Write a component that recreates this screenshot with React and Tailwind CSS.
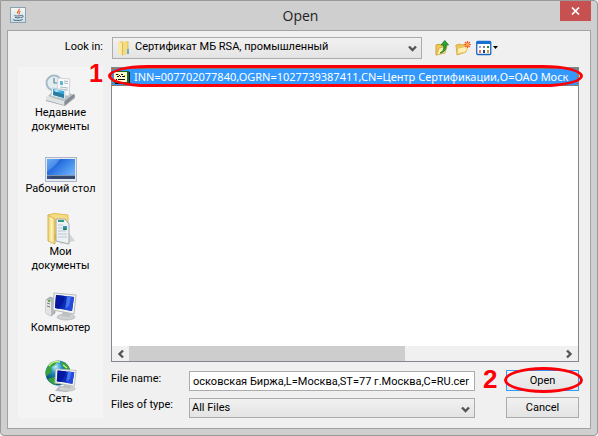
import { useState } from 'react'

const FILE = 'INN=007702077840,OGRN=1027739387411,CN=Центр Сертификации,О=ОАО Моск'

// ============================================================================
// Icons
// ============================================================================
function JavaIcon() {
  return (
    <svg width="16" height="16" viewBox="0 0 16 16" fill="none">
      <defs>
        <linearGradient id="java" x2="0" y2="1">
          <stop stopColor="#f7f7f6"/>
          <stop offset="1" stopColor="#c9dbe5"/>
        </linearGradient>
      </defs>
      <rect x=".5" y=".5" width="15" height="15" fill="url(#java)" stroke="#8ca3af"/>
      <path d="M9.2 1.8c1 1.8-3 2.4-1.5 4.8M10.4 4.3c-2 1-1 1.7-1.2 3" stroke="#e2672d" strokeWidth="1.2"/>
      <path d="M4.3 8.3c-.8.9 6 .9 7 0M5 10.3c1 .7 4 .7 5.5.1M3.4 12.2c-1 1.7 8.5 1.6 9.2.1M11.4 8.4c2.8-.5 2 2-.4 2.3" stroke="#43647a"/>
    </svg>
  )
}

function FolderIcon() {
  return (
    <svg width="16" height="16" viewBox="0 0 16 16">
      <path d="M2 2l4-1 2 1 4-1v13l-6 1-4-2z" fill="#e9cf73"/>
      <path d="M2 1.5L6.5 3v12.5L2 13.5z" fill="#f9e9a5"/>
      <path d="M7 2l5-1v12.5l-5 1z" fill="#f5dc83"/>
      <path d="M6.5 3v12.5M12 1v9" stroke="#d4b14e" strokeWidth=".8"/>
      <path d="M11 14V9.500c0-1 2-1 2 0V14z" fill="#70afcc"/>
    </svg>
  )
}

function UpFolderIcon() {
  return (
    <svg width="15" height="16" viewBox="0 0 15 16">
      <path d="M1 5l3-1 1 1 5-1v8l-9 3z" fill="#edc854" stroke="#d2a33d"/>
      <path d="M1.500 15L4 8l8-2-2 7z" fill="#ffefad" stroke="#d8b252"/>
      <path d="M5 13c4-2 4-5 3.500-8H6l3.800-4.500L13.500 5H11c.5 5-2 7.500-6 8z" fill="#2fa52d" stroke="#17751c" strokeWidth=".8"/>
    </svg>
  )
}

function NewFolderIcon() {
  return (
    <svg width="16" height="16" viewBox="0 0 16 16">
      <path d="M1 5l4-1 1 1 5-1v8l-9 3z" fill="#edc854" stroke="#d8ac4c"/>
      <path d="M2 14l1-6 10-2-2 6z" fill="#ffefb1" stroke="#e4c16c"/>
      <path d="M12.500 1v7M9 4.500h7M10 2l5 5M15 2l-5 5" stroke="#f05a2c" strokeWidth="1.200"/>
      <circle cx="12.500" cy="4.500" r="1.600" fill="#ffb13d"/>
    </svg>
  )
}

function ViewIcon() {
  return (
    <svg width="16" height="16" viewBox="0 0 16 16">
      <rect x=".75" y="1.500" width="14" height="13" rx="1" fill="#fff" stroke="#1567c2" strokeWidth="1.300"/>
      <path d="M1 1h14v3H1z" fill="#1670d1"/>
      <path d="M3 6h2v2H3z" fill="#a7a0c5"/>
      <path d="M7 6h2v2H7z" fill="#7778a8"/>
      <path d="M11 6h2v2h-2z" fill="#23913c"/>
      <path d="M3 10h2v3H3z" fill="#ef7547"/>
      <path d="M7 10h2v3H7z" fill="#183e9b"/>
      <path d="M11 10h2v3h-2z" fill="#d79e28"/>
    </svg>
  )
}

function CertIcon() {
  return (
    <svg width="16" height="13" viewBox="0 0 16 13" shapeRendering="crispEdges">
      <path d="M1 1h15v12H1z" fill="#111"/>
      <path d="M0 0h15v12H0z" fill="#176c2b"/>
      <path d="M0 1h13v10H0z" fill="#fffbd0"/>
      <path d="M2 3h2v1H2zM5 4h1v1H5zM7 3h2v1H7zM3 5h2v1H3zM6 5h1v1H6zM8 5h3v1H8zM2 8h1v1H2zM4 8h7v1H4z" fill="#111"/>
      <path d="M4 3h1v1H4zM10 4h1v1h-1z" fill="#d5a000"/>
    </svg>
  )
}

function RecentIcon() {
  return (
    <svg width="32" height="32" viewBox="0 0 32 32">
      <path d="M3 22l7-7 20 6-9 10z" fill="#b8bec2"/>
      <circle cx="9" cy="9" r="7.500" fill="#e3eef3" stroke="#a5bbc6" strokeWidth="2"/>
      <path d="M9 4v5h4" fill="none" stroke="#638398" strokeWidth="1.200"/>
      <path d="M13 4l12 1-1 17-12-2z" fill="#f9fbfb" stroke="#ccd3d7"/>
      <path d="M15 7l3 .3v4l-3-.3z" fill="#62b4d3"/>
      <path d="M19 7l4 .5M19 9l4 .5M15 13l8 1M15 15l8 1" stroke="#a9bac2"/>
      <path d="M7 14l13 2v9L6 22z" fill="#f6fbfc" stroke="#c1cdd3"/>
      <path d="M8 15l11 2v7L8 21z" fill="#37a7df"/>
      <path d="M8 19c3-4 6 2 11 1v4L8 21z" fill="#2b7c9c"/>
      <path d="M9 16l7 1-5 1z" fill="#dff6ff"/>
      <path d="M1 23l19 5 10-8v4l-10 8-19-5z" fill="#a1a9ad"/>
      <path d="M1 22l18 5v4L1 26z" fill="#dfe3e4"/>
      <path d="M20 27l9-7v3l-9 8z" fill="#828b91"/>
    </svg>
  )
}

function DesktopIcon() {
  return (
    <svg width="32" height="25" viewBox="0 0 32 25">
      <defs>
        <linearGradient id="desk" x1="0" y1="0" x2="1" y2=".7">
          <stop stopColor="#5ca5f3"/>
          <stop offset=".35" stopColor="#2169dc"/>
          <stop offset="1" stopColor="#66adfa"/>
        </linearGradient>
      </defs>
      <rect x=".5" y=".5" width="31" height="24" fill="#e5eaf1" stroke="#aab7c8"/>
      <rect x="2" y="2" width="28" height="17" fill="url(#desk)"/>
      <path d="M2 2h13C11 8 6 12 2 15z" fill="#8abdf7" opacity=".4"/>
      <path d="M2 18h28v4H2z" fill="#344970"/>
      <path d="M2 18h28v1H2z" fill="#8194ad"/>
      <path d="M2 19h3v3H2z" fill="#35518f"/>
    </svg>
  )
}

function DocumentsIcon() {
  return (
    <svg width="30" height="32" viewBox="0 0 30 32">
      <defs>
        <linearGradient id="docs">
          <stop stopColor="#eccf6d"/>
          <stop offset=".55" stopColor="#fff4bd"/>
          <stop offset="1" stopColor="#e5c35e"/>
        </linearGradient>
      </defs>
      <path d="M14 31L29 28 23 20z" fill="#d5d5d5"/>
      <path d="M2 2l6-1.500 14 1.500v10l-12 16z" fill="#f6dc80" stroke="#dfbb51"/>
      <path d="M10 6l9 0 4 5v20l-13-3z" fill="#edf1f3" stroke="#a0a9ad"/>
      <path d="M12 8h6" stroke="#2e9b83" strokeWidth="2"/>
      <path d="M12 12h5M12 15h5M12 18h8M12 21h9M12 24h9" stroke="#b9c7ce"/>
      <path d="M17 13h4v4h-4z" fill="#349bc4"/>
      <path d="M17 16l2-2 2 3h-4z" fill="#2d8263"/>
      <path d="M2 2l7 4v25L2 28z" fill="url(#docs)" stroke="#d8b54e"/>
      <path d="M8 21c2 0 2 4 0 5" fill="none" stroke="#d2aa44"/>
    </svg>
  )
}

function Monitor() {
  return (
    <>
      <ellipse cx="21" cy="25" rx="9" ry="3" fill="#cfd1d2" stroke="#a9abac" strokeWidth=".6"/>
      <path d="M18 17l6 1 1 7-8-1z" fill="#bbc0c2"/>
      <path d="M9 1l22 2-2 19L8 18z" fill="#f4f4ef" stroke="#b6bab9"/>
      <path d="M11 3l18 2-2 14-17-3z" fill="#092cb9"/>
      <path d="M11 3l9 1c-1 6-3 10-6 13l-4-1z" fill="#0519a0"/>
      <path d="M22 4.200l7 .8-2 14-7-1.200c2-4 3-8 2-13.600z" fill="#2349e0"/>
      <path d="M22 4.200l4 .5-2 9-4 3z" fill="#6294fa" opacity=".6"/>
    </>
  )
}

function ComputerIcon() {
  return (
    <svg width="32" height="29" viewBox="0 0 32 29">
      <path d="M1 8l4-3 5 2v14l-4 3-5-3z" fill="#b7babc" stroke="#919699" strokeWidth=".7"/>
      <path d="M1 8l5 2v14l-5-3z" fill="#e3e5e5"/>
      <path d="M2 11l3 1M2 14l3 1" stroke="#777e80"/>
      <path d="M3 8h2v2H3z" fill="#55b941"/>
      <Monitor/>
    </svg>
  )
}

function NetworkIcon() {
  return (
    <svg width="32" height="32" viewBox="0 0 32 32">
      <defs>
        <radialGradient id="globe" cx=".4" cy=".25">
          <stop stopColor="#bff3fa"/>
          <stop offset=".5" stopColor="#2a8fc3"/>
          <stop offset="1" stopColor="#075985"/>
        </radialGradient>
      </defs>
      <circle cx="13" cy="13" r="12.500" fill="url(#globe)"/>
      <path d="M2 8C4 3 8 1 12 1l-2 4-4 2 1 4-5 5C0 14 0 11 2 8zM16 2c5 0 8 4 9 8l-5-1-3-4zM5 18l5-1 3 5-2 3C7 24 4 21 3 19z" fill="#39a239"/>
      <path d="M4 6c3-4 7-5 11-4M18 5l4 3" fill="none" stroke="#bff27c" strokeWidth="1.500"/>
      <path d="M10 31l4-5 14 2-6 4z" fill="#b8bbbc"/>
      <svg x="9" y="8" width="23" height="24" viewBox="7 0 25 29" preserveAspectRatio="none"><Monitor/></svg>
    </svg>
  )
}

function Chevron({ className }) {
  return (
    <svg className={className} width="9" height="8" viewBox="0 0 9 8" fill="none">
      <path d="M1 1.500l3.500 3.500L8 1.500" stroke="#555" strokeWidth="2.400"/>
    </svg>
  )
}

// ============================================================================
// Dialog parts
// ============================================================================
const PLACES = [
  { label: 'Недавние документы', icon: RecentIcon, height: 'h-[83px]' },
  { label: 'Рабочий стол', icon: DesktopIcon, height: 'h-[56px]' },
  { label: 'Мои документы', icon: DocumentsIcon, height: 'h-[79px]' },
  { label: 'Компьютер', icon: ComputerIcon, height: 'h-[68px]' },
  { label: 'Сеть', icon: NetworkIcon, height: 'h-[65px]' },
]

function Places() {
  return (
    <nav className="flex w-[85px] shrink-0 flex-col bg-[#f4f4f4]">
      {PLACES.map(({ label, icon: Icon, height }) => (
        <button key={label} type="button" className={`flex flex-col items-center px-1 pt-[7px] text-center leading-[14px] ${height}`}>
          <Icon/>
          <span>{label}</span>
        </button>
      ))}
    </nav>
  )
}

function Ring({ className }) {
  return <span className={`pointer-events-none absolute border-[3px] border-[#fb0007] ${className}`}/>
}

export default function App() {
  const [name, setName] = useState('осковская Биржа,L=Москва,ST=77 г.Москва,C=RU.cer')

  return (
    <div className="bg-white">
      <main className="flex min-h-screen flex-col rounded-tr-[4px] rounded-b-[4px] border border-[#999] bg-[#cfcfcf] px-[6px] pb-[6px] font-['Roboto',sans-serif] text-[11px] text-black">
        <header className="grid h-[29px] grid-cols-[46px_1fr_46px] pl-[3px]">
          <span className="pt-[6px]"><JavaIcon/></span>
          <h1 className="pt-1 text-center font-['Open_Sans',sans-serif] text-[14px] leading-[22px] text-[#222]">Open</h1>
          <button type="button" aria-label="Close" className="flex h-5 w-[31px] items-center justify-center justify-self-end bg-[#c75050]">
            <svg width="9" height="8" viewBox="0 0 9 8"><path d="M1 .5l7 7M8 .5l-7 7" stroke="#fff" strokeWidth="1.700"/></svg>
          </button>
        </header>

        <section className="flex grow flex-col border border-[#a3a3a3] bg-[#f0f0f0] pt-[5px] pr-[11px] pb-[10px] pl-[10px]">
          <div className="flex h-[23px] items-center">
            <label htmlFor="folder" className="w-[94px] shrink-0 pr-[9px] text-right">Look in:</label>
            <div className="relative mr-[13px] h-[22px] w-[310px]">
              <select id="folder" className="h-full w-full appearance-none border border-[#acacac] bg-linear-to-b from-[#f1f1f1] to-[#e4e4e4] pl-[22px]">
                <option>Сертификат МБ RSA, промышленный</option>
              </select>
              <span className="pointer-events-none absolute top-[3px] left-1"><FolderIcon/></span>
              <Chevron className="pointer-events-none absolute top-2 right-[5px]"/>
            </div>
            <div className="flex items-center gap-[5px]">
              <button type="button" aria-label="Up one level"><UpFolderIcon/></button>
              <button type="button" aria-label="New folder"><NewFolderIcon/></button>
              <button type="button" aria-label="View" className="flex items-center">
                <ViewIcon/>
                <svg className="ml-px" width="5" height="3" viewBox="0 0 5 3"><path d="M0 0h5L2.500 3z"/></svg>
              </button>
            </div>
          </div>

          <div className="mt-2 flex grow gap-2">
            <Places/>

            <div className="flex min-w-0 grow flex-col">
              <div className="relative flex grow flex-col border border-[#828790] bg-white">
                <div className="flex h-[18px] items-center overflow-hidden border border-dotted border-[#cc6600] bg-[#3399ff] pl-px whitespace-nowrap text-white">
                  <span className="shrink-0"><CertIcon/></span>
                  <span className="ml-1 font-['Noto_Sans',sans-serif]">{FILE}</span>
                </div>
                <Ring className="-top-[3px] -right-[5px] -left-[4px] h-[22px] rounded-[40px/11px]"/>
                <b className="absolute -top-[9px] -left-[23px] font-['Liberation_Sans',sans-serif] text-[25px] leading-[28px] text-[#fb0007]">1</b>

                <div className="mt-auto flex h-[15px] bg-[#f0f0f0]">
                  <button type="button" aria-label="Scroll left" className="flex w-[17px] items-center justify-center"><Chevron className="rotate-90"/></button>
                  <div className="grow"><div className="h-full w-[64%] bg-[#cdcdcd]"/></div>
                  <button type="button" aria-label="Scroll right" className="flex w-[17px] items-center justify-center"><Chevron className="-rotate-90"/></button>
                </div>
              </div>

              <div className="mt-2 grid grid-cols-[78px_1fr_73px] gap-y-[6px]">
                <label htmlFor="name" className="pt-[2px] leading-[14px]">File name:</label>
                <input id="name" value={name} onChange={e => setName(e.target.value)} className="mt-px mr-[31px] h-5 min-w-0 border border-[#ababab] bg-white pl-[3px] outline-none"/>
                <div className="relative">
                  <button type="button" className="h-[21px] w-full border border-[#3399ff] bg-linear-to-b from-[#f1f1f1] to-[#e4e4e4] leading-[18px]">Open</button>
                  <Ring className="-top-[3px] -right-[4px] -left-[2px] h-[26px] rounded-[50%]"/>
                  <b className="absolute -top-[5px] -left-[23px] font-['Liberation_Sans',sans-serif] text-[26px] leading-[28px] text-[#fb0007]">2</b>
                </div>
                <label htmlFor="type" className="pt-px leading-[14px]">Files of type:</label>
                <div className="relative mt-px mr-[31px] h-5">
                  <select id="type" className="h-full w-full appearance-none border border-[#acacac] bg-linear-to-b from-[#f1f1f1] to-[#e4e4e4] pl-[2px]">
                    <option>All Files</option>
                  </select>
                  <Chevron className="pointer-events-none absolute top-2 right-[5px]"/>
                </div>
                <button type="button" className="h-[21px] border border-[#acacac] bg-linear-to-b from-[#f1f1f1] to-[#e4e4e4] leading-[18px]">Cancel</button>
              </div>
            </div>
          </div>
        </section>
      </main>
    </div>
  )
}
